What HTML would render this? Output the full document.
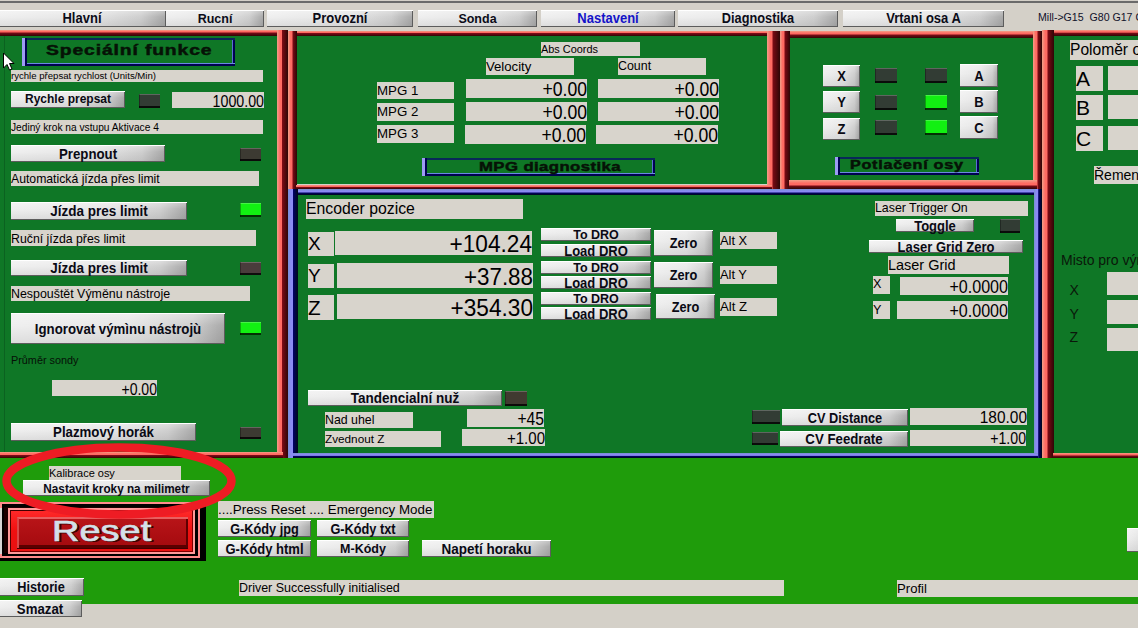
<!DOCTYPE html>
<html><head><meta charset="utf-8"><style>
html,body{margin:0;padding:0;}
body{width:1138px;height:628px;overflow:hidden;position:relative;background:#d4d0c8;font-family:"Liberation Sans",sans-serif;}
body>div{position:absolute;box-sizing:border-box;}
.b{text-align:center;font-weight:bold;white-space:nowrap;
 background:linear-gradient(180deg,rgba(255,255,255,.35) 0%,rgba(255,255,255,0) 40%,rgba(0,0,0,.08) 100%),linear-gradient(90deg,#efefef 0%,#e6e6e6 55%,#cfcfcf 85%,#a8a8a8 100%);
 box-shadow:inset 0 1px 0 #ffffff, inset -1px -1px 0 #5c5c5c;}
.bs{display:inline-block;line-height:normal;transform:scaleY(1.08);transform-origin:50% 79%;}
.l{background:#d8d4cc;color:#000;white-space:nowrap;overflow:hidden;}
.led{box-shadow:inset 1px 0 0 rgba(0,0,0,.3), inset 0 -2px 0 rgba(0,0,0,.8), inset 0 1px 0 rgba(255,255,255,.22);}
.t{white-space:nowrap;line-height:1;}
.title{border-style:solid;border-width:2px 2px 2px 3px;border-color:#0a1e50 #5050d0 #1a1a80 #9090f0;box-shadow:inset -1px -1px 0 #2040a0, 1px 1px 0 #000030;text-align:center;white-space:nowrap;}
.title span{font-weight:bold;color:#061406;display:inline-block;}
</style></head><body>
<div style="left:0px;top:0px;width:1138px;height:3px;background:linear-gradient(#d4d0c8 0,#d4d0c8 1px,#6a6a6a 1px,#6a6a6a 3px)"></div>
<div style="left:0px;top:455px;width:1138px;height:149px;background:#1f9c0b"></div>
<div style="left:0px;top:36px;width:277px;height:416px;background:#0f7726"></div>
<div style="left:296px;top:36px;width:471px;height:148px;background:#0f7726"></div>
<div style="left:790px;top:38px;width:243px;height:142px;background:#0f7726"></div>
<div style="left:1053px;top:36px;width:90px;height:417px;background:#0f7726"></div>
<div style="left:297px;top:194px;width:737px;height:259px;background:#0f7726"></div>
<div style="left:4px;top:36px;width:1px;height:416px;background:#0b6220"></div>
<div style="left:0px;top:30px;width:288px;height:6px;background:linear-gradient(180deg,#f0a088 0px,#ff6a62 1.5px,#ff6a62 2.0px,#7a0a14 3.0px,#2e0606 100%)"></div>
<div style="left:277px;top:30px;width:11px;height:428px;background:linear-gradient(90deg,#f0a088 0px,#ff6a62 3.0px,#ff6a62 4.5px,#7a0a14 5.5px,#2e0606 100%)"></div>
<div style="left:0px;top:452px;width:283px;height:5.5px;background:linear-gradient(180deg,#f0a088 0px,#ff6a62 1.8px,#ff6a62 2.5px,#7a0a14 3.5px,#2e0606 100%)"></div>
<div style="left:288px;top:31px;width:492px;height:5px;background:linear-gradient(180deg,#f0a088 0px,#ff6a62 1.2px,#ff6a62 1.5px,#7a0a14 2.5px,#2e0606 100%)"></div>
<div style="left:288px;top:31px;width:8.5px;height:158px;background:linear-gradient(90deg,#f0a088 0px,#ff6a62 2.7px,#ff6a62 4.0px,#7a0a14 5.0px,#2e0606 100%)"></div>
<div style="left:767px;top:31px;width:13px;height:158px;background:linear-gradient(90deg,#f0a088 0px,#ff6a62 3.3px,#ff6a62 5.0px,#7a0a14 6.0px,#2e0606 100%)"></div>
<div style="left:296px;top:184.5px;width:476px;height:4.5px;background:linear-gradient(180deg,#f0a088 0px,#ff6a62 1.2px,#ff6a62 1.5px,#7a0a14 2.5px,#2e0606 100%)"></div>
<div style="left:780px;top:31px;width:262px;height:7px;background:linear-gradient(180deg,#f0a088 0px,#ff6a62 2.1px,#ff6a62 3.0px,#7a0a14 4.0px,#2e0606 100%)"></div>
<div style="left:780px;top:31px;width:10px;height:158px;background:linear-gradient(90deg,#f0a088 0px,#ff6a62 2.7px,#ff6a62 4.0px,#7a0a14 5.0px,#2e0606 100%)"></div>
<div style="left:1033px;top:31px;width:9px;height:158px;background:linear-gradient(90deg,#f0a088 0px,#ff6a62 2.7px,#ff6a62 4.0px,#7a0a14 5.0px,#2e0606 100%)"></div>
<div style="left:789px;top:179.5px;width:248px;height:9.0px;background:linear-gradient(180deg,#f0a088 0px,#ff6a62 3.3px,#ff6a62 5.0px,#7a0a14 6.0px,#2e0606 100%)"></div>
<div style="left:1042px;top:30px;width:96px;height:6px;background:linear-gradient(180deg,#f0a088 0px,#ff6a62 1.6px,#ff6a62 2.2px,#7a0a14 3.2px,#2e0606 100%)"></div>
<div style="left:1042px;top:30px;width:11.5px;height:428px;background:linear-gradient(90deg,#f0a088 0px,#ff6a62 3.3px,#ff6a62 5.0px,#7a0a14 6.0px,#2e0606 100%)"></div>
<div style="left:1053px;top:453px;width:85px;height:5px;background:linear-gradient(180deg,#f0a088 0px,#ff6a62 1.5px,#ff6a62 2.0px,#7a0a14 3.0px,#2e0606 100%)"></div>
<div style="left:288px;top:188.5px;width:754px;height:6.099999999999994px;background:linear-gradient(180deg,#7890d0 0px,#8a8af4 2.1px,#8a8af4 3.0px,#000064 4.0px,#000818 100%)"></div>
<div style="left:288px;top:188.5px;width:9.699999999999989px;height:269.5px;background:linear-gradient(90deg,#7890d0 0px,#8a8af4 3.0px,#8a8af4 4.5px,#000064 5.5px,#000818 100%)"></div>
<div style="left:1034px;top:188.5px;width:8px;height:269.5px;background:linear-gradient(90deg,#7890d0 0px,#8a8af4 2.5px,#8a8af4 3.7px,#000064 4.7px,#000818 100%)"></div>
<div style="left:293px;top:452.6px;width:745px;height:5.399999999999977px;background:linear-gradient(180deg,#7890d0 0px,#8a8af4 1.7px,#8a8af4 2.4px,#000064 3.4px,#000818 100%)"></div>
<div class="b" style="left:-2px;top:10px;width:168px;height:17px;line-height:18px;font-size:13.0px;color:#0c0c18"><span class="bs">Hlavní</span></div>
<div class="b" style="left:166px;top:10px;width:98px;height:17px;line-height:18px;font-size:12.5px;color:#0c0c18"><span class="bs">Rucní</span></div>
<div class="b" style="left:267px;top:10px;width:146px;height:17px;line-height:18px;font-size:13.0px;color:#0c0c18"><span class="bs">Provozní</span></div>
<div class="b" style="left:418px;top:10px;width:119px;height:17px;line-height:18px;font-size:12.5px;color:#0c0c18"><span class="bs">Sonda</span></div>
<div class="b" style="left:541px;top:10px;width:134px;height:17px;line-height:18px;font-size:13.0px;color:#1414c8"><span class="bs">Nastavení</span></div>
<div class="b" style="left:678px;top:10px;width:160px;height:17px;line-height:18px;font-size:12.75px;color:#0c0c18"><span class="bs">Diagnostika</span></div>
<div class="b" style="left:843px;top:10px;width:161px;height:17px;line-height:18px;font-size:13.0px;color:#0c0c18"><span class="bs">Vrtani osa A</span></div>
<div class="t" style="left:1038px;top:12px;font-size:10.6px;color:#10102a;font-weight:normal;">Mill-&gt;G15&nbsp;&nbsp;G80 G17 G40 G21 G90 G94 G54 G49 G99 G64 G97</div>
<div style="left:22px;top:38px;width:213px;height:27.5px;box-shadow:inset 3px 0 0 #9c9cf4, inset 5px 0 0 #000050, inset 0 2px 0 #082858, inset 0 -2px 0 #000050, inset 0 -3px 0 #6a8ae0, inset -2px 0 0 #000050, inset -3px 0 0 #5a70d0"></div>
<div class="t" style="left:45.6px;top:42.7px;font-size:14px;font-weight:bold;letter-spacing:0.63px;color:#061206;-webkit-text-stroke:0.45px #061206"><span style="display:inline-block;transform:scaleX(1.38);transform-origin:0 0">Speciální funkce</span></div>
<div class="l" style="left:11px;top:70px;width:252px;height:12px;line-height:12px;font-size:9.61px;padding-left:0px;font-weight:normal">rychle přepsat rychlost (Units/Min)</div>
<div class="b" style="left:11px;top:91px;width:114px;height:17px;line-height:16px;font-size:12.0px;color:#0a0a14"><span class="bs">Rychle prepsat</span></div>
<div class="led" style="left:139px;top:94px;width:21px;height:14px;background:#323c34"></div>
<div class="l" style="left:172px;top:92px;width:92px;height:16px;line-height:21px;font-size:14.22px;text-align:right;padding-right:0px"><span style="display:inline-block;line-height:normal;transform:scaleY(1.12);transform-origin:100% 79%">1000.00</span></div>
<div class="l" style="left:11px;top:120px;width:252px;height:14px;line-height:16px;font-size:10.2px;padding-left:0px;font-weight:normal">Jediný krok na vstupu Aktivace 4</div>
<div class="b" style="left:11px;top:145px;width:154px;height:17px;line-height:19px;font-size:13.25px;color:#0a0a14"><span class="bs">Prepnout</span></div>
<div class="led" style="left:240px;top:148px;width:21px;height:13px;background:#3c3a32"></div>
<div class="l" style="left:11px;top:171px;width:248px;height:15px;line-height:17px;font-size:12.22px;padding-left:0px;font-weight:normal">Automatická jízda přes limit</div>
<div class="b" style="left:11px;top:202px;width:176px;height:18px;line-height:20px;font-size:13.5px;color:#0a0a14"><span class="bs">Jízda pres limit</span></div>
<div class="led" style="left:240px;top:203px;width:21px;height:14px;background:#12f012"></div>
<div class="l" style="left:11px;top:230px;width:245px;height:16px;line-height:18px;font-size:12.32px;padding-left:0px;font-weight:normal">Ruční jízda přes limit</div>
<div class="b" style="left:11px;top:260px;width:176px;height:16px;line-height:18px;font-size:13.5px;color:#0a0a14"><span class="bs">Jízda pres limit</span></div>
<div class="led" style="left:240px;top:262px;width:21px;height:13px;background:#4a3c3c"></div>
<div class="l" style="left:11px;top:286px;width:239px;height:15px;line-height:17px;font-size:12.4px;padding-left:0px;font-weight:normal">Nespouštět Výměnu nástroje</div>
<div class="b" style="left:11px;top:313px;width:214px;height:31px;line-height:33px;font-size:13.25px;color:#0a0a14"><span class="bs">Ignorovat výmìnu nástrojù</span></div>
<div class="led" style="left:240px;top:322px;width:21px;height:13px;background:#12f012"></div>
<div class="t" style="left:11px;top:355px;font-size:10.85px;color:#061006;font-weight:normal;">Průměr sondy</div>
<div class="l" style="left:52px;top:380px;width:105px;height:16px;line-height:21px;font-size:14.06px;text-align:right;padding-right:0px"><span style="display:inline-block;line-height:normal;transform:scaleY(1.12);transform-origin:100% 79%">+0.00</span></div>
<div class="b" style="left:11px;top:423px;width:185px;height:18px;line-height:20px;font-size:13.25px;color:#0a0a14"><span class="bs">Plazmový horák</span></div>
<div class="led" style="left:240px;top:427px;width:21px;height:12px;background:#3c3a32"></div>
<div class="l" style="left:541px;top:42px;width:99px;height:14px;line-height:14px;font-size:10.91px;padding-left:0px;font-weight:normal">Abs Coords</div>
<div class="l" style="left:486px;top:58px;width:88px;height:17px;line-height:17px;font-size:13.17px;padding-left:0px;font-weight:normal">Velocity</div>
<div class="l" style="left:618px;top:58px;width:88px;height:17px;line-height:17px;font-size:12.42px;padding-left:0px;font-weight:normal">Count</div>
<div class="l" style="left:377px;top:82px;width:77px;height:17px;line-height:17px;font-size:13.29px;padding-left:0px;font-weight:normal">MPG 1</div>
<div class="l" style="left:377px;top:103px;width:77px;height:18px;line-height:18px;font-size:13.29px;padding-left:0px;font-weight:normal">MPG 2</div>
<div class="l" style="left:377px;top:125px;width:77px;height:18px;line-height:18px;font-size:13.29px;padding-left:0px;font-weight:normal">MPG 3</div>
<div class="l" style="left:466px;top:79px;width:121px;height:19px;line-height:22px;font-size:17.63px;text-align:right;padding-right:0px"><span style="display:inline-block;line-height:normal;transform:scaleY(1.12);transform-origin:100% 79%">+0.00</span></div>
<div class="l" style="left:466px;top:102px;width:121px;height:19px;line-height:22px;font-size:17.63px;text-align:right;padding-right:0px"><span style="display:inline-block;line-height:normal;transform:scaleY(1.12);transform-origin:100% 79%">+0.00</span></div>
<div class="l" style="left:465px;top:125px;width:121px;height:19px;line-height:22px;font-size:17.63px;text-align:right;padding-right:0px"><span style="display:inline-block;line-height:normal;transform:scaleY(1.12);transform-origin:100% 79%">+0.00</span></div>
<div class="l" style="left:598px;top:79px;width:121px;height:19px;line-height:22px;font-size:17.63px;text-align:right;padding-right:0px"><span style="display:inline-block;line-height:normal;transform:scaleY(1.12);transform-origin:100% 79%">+0.00</span></div>
<div class="l" style="left:598px;top:102px;width:121px;height:19px;line-height:22px;font-size:17.63px;text-align:right;padding-right:0px"><span style="display:inline-block;line-height:normal;transform:scaleY(1.12);transform-origin:100% 79%">+0.00</span></div>
<div class="l" style="left:596px;top:125px;width:122px;height:19px;line-height:22px;font-size:17.63px;text-align:right;padding-right:0px"><span style="display:inline-block;line-height:normal;transform:scaleY(1.12);transform-origin:100% 79%">+0.00</span></div>
<div style="left:422px;top:158px;width:233px;height:17.5px;box-shadow:inset 3px 0 0 #9c9cf4, inset 5px 0 0 #000050, inset 0 2px 0 #082858, inset 0 -2px 0 #000050, inset 0 -3px 0 #6a8ae0, inset -2px 0 0 #000050, inset -3px 0 0 #5a70d0"></div>
<div class="t" style="left:479.4px;top:160.8px;font-size:12.6px;font-weight:bold;letter-spacing:0.30px;color:#061206;-webkit-text-stroke:0.45px #061206"><span style="display:inline-block;transform:scaleX(1.33);transform-origin:0 0">MPG diagnostika</span></div>
<div class="b" style="left:823px;top:65px;width:37px;height:22px;line-height:24px;font-size:13px;color:#0a0a14"><span class="bs">X</span></div>
<div class="b" style="left:823px;top:91px;width:37px;height:22px;line-height:24px;font-size:13px;color:#0a0a14"><span class="bs">Y</span></div>
<div class="b" style="left:823px;top:118px;width:37px;height:22px;line-height:24px;font-size:13px;color:#0a0a14"><span class="bs">Z</span></div>
<div class="b" style="left:960px;top:64px;width:38px;height:23px;line-height:25px;font-size:13px;color:#0a0a14"><span class="bs">A</span></div>
<div class="b" style="left:960px;top:90px;width:38px;height:23px;line-height:25px;font-size:13px;color:#0a0a14"><span class="bs">B</span></div>
<div class="b" style="left:960px;top:116px;width:38px;height:23px;line-height:25px;font-size:13px;color:#0a0a14"><span class="bs">C</span></div>
<div class="led" style="left:875px;top:68px;width:22px;height:15px;background:#323c34"></div>
<div class="led" style="left:925px;top:68px;width:22px;height:15px;background:#323c34"></div>
<div class="led" style="left:875px;top:95px;width:22px;height:15px;background:#323c34"></div>
<div class="led" style="left:925px;top:95px;width:22px;height:15px;background:#12f012"></div>
<div class="led" style="left:875px;top:120px;width:22px;height:15px;background:#323c34"></div>
<div class="led" style="left:925px;top:120px;width:22px;height:15px;background:#12f012"></div>
<div style="left:835px;top:156.5px;width:144px;height:18.099999999999994px;box-shadow:inset 3px 0 0 #9c9cf4, inset 5px 0 0 #000050, inset 0 2px 0 #082858, inset 0 -2px 0 #000050, inset 0 -3px 0 #6a8ae0, inset -2px 0 0 #000050, inset -3px 0 0 #5a70d0"></div>
<div class="t" style="left:850.2px;top:160.1px;font-size:11.9px;font-weight:bold;letter-spacing:0.53px;color:#061206;-webkit-text-stroke:0.45px #061206"><span style="display:inline-block;transform:scaleX(1.36);transform-origin:0 0">Potlačení osy</span></div>
<div class="l" style="left:1070px;top:40px;width:80px;height:20px;line-height:20px;font-size:15.6px;padding-left:0px;font-weight:normal">Poloměr os</div>
<div class="l" style="left:1076px;top:66px;width:27px;height:25px;line-height:25px;font-size:21px;padding-left:0px;font-weight:normal">A</div>
<div class="l" style="left:1108px;top:66px;width:40px;height:24px;line-height:24px;font-size:13px;padding-left:0px;font-weight:normal"></div>
<div class="l" style="left:1076px;top:95px;width:27px;height:25px;line-height:25px;font-size:21px;padding-left:0px;font-weight:normal">B</div>
<div class="l" style="left:1108px;top:95px;width:40px;height:24px;line-height:24px;font-size:13px;padding-left:0px;font-weight:normal"></div>
<div class="l" style="left:1076px;top:126px;width:27px;height:25px;line-height:25px;font-size:21px;padding-left:0px;font-weight:normal">C</div>
<div class="l" style="left:1108px;top:126px;width:40px;height:24px;line-height:24px;font-size:13px;padding-left:0px;font-weight:normal"></div>
<div class="l" style="left:1094px;top:166px;width:60px;height:18px;line-height:18px;font-size:14px;padding-left:0px;font-weight:normal">Řemen</div>
<div class="t" style="left:1061px;top:252.5px;font-size:14px;color:#0a180a;font-weight:normal;">Misto pro výměnu</div>
<div class="t" style="left:1069.5px;top:282.5px;font-size:14px;color:#0a180a;font-weight:normal;">X</div>
<div class="l" style="left:1107px;top:272px;width:40px;height:23px;line-height:23px;font-size:13px;padding-left:0px;font-weight:normal"></div>
<div class="t" style="left:1069.5px;top:306.5px;font-size:14px;color:#0a180a;font-weight:normal;">Y</div>
<div class="l" style="left:1107px;top:300px;width:40px;height:24px;line-height:24px;font-size:13px;padding-left:0px;font-weight:normal"></div>
<div class="t" style="left:1069.5px;top:329.5px;font-size:14px;color:#0a180a;font-weight:normal;">Z</div>
<div class="l" style="left:1107px;top:328px;width:40px;height:23px;line-height:23px;font-size:13px;padding-left:0px;font-weight:normal"></div>
<div class="b" style="left:1127px;top:528px;width:20px;height:24px;line-height:26px;font-size:13px;color:#0a0a14"><span class="bs"></span></div>
<div class="l" style="left:306px;top:199px;width:217px;height:20px;line-height:20px;font-size:15.8px;padding-left:0px;font-weight:normal">Encoder pozice</div>
<div class="l" style="left:308px;top:232px;width:26px;height:24px;line-height:24px;font-size:19.08px;padding-left:0px;font-weight:normal">X</div>
<div class="l" style="left:335px;top:231px;width:197px;height:24px;line-height:28px;font-size:22.63px;text-align:right;padding-right:0px"><span style="display:inline-block;line-height:normal;transform:scaleY(1.07);transform-origin:100% 79%">+104.24</span></div>
<div class="l" style="left:308px;top:264px;width:26px;height:24px;line-height:24px;font-size:19.08px;padding-left:0px;font-weight:normal">Y</div>
<div class="l" style="left:337px;top:263px;width:196px;height:25px;line-height:29px;font-size:22.37px;text-align:right;padding-right:0px"><span style="display:inline-block;line-height:normal;transform:scaleY(1.07);transform-origin:100% 79%">+37.88</span></div>
<div class="l" style="left:308px;top:295px;width:26px;height:25px;line-height:25px;font-size:20.67px;padding-left:0px;font-weight:normal">Z</div>
<div class="l" style="left:337px;top:294px;width:196px;height:25px;line-height:29px;font-size:22.63px;text-align:right;padding-right:0px"><span style="display:inline-block;line-height:normal;transform:scaleY(1.07);transform-origin:100% 79%">+354.30</span></div>
<div class="b" style="left:541px;top:228px;width:110px;height:13px;line-height:15px;font-size:12.5px;color:#0a0a14"><span class="bs">To DRO</span></div>
<div class="b" style="left:541px;top:244px;width:110px;height:13px;line-height:15px;font-size:13.0px;color:#0a0a14"><span class="bs">Load DRO</span></div>
<div class="b" style="left:654px;top:230px;width:59px;height:26px;line-height:28px;font-size:12.75px;color:#0a0a14"><span class="bs">Zero</span></div>
<div class="b" style="left:541px;top:261px;width:110px;height:13px;line-height:15px;font-size:12.5px;color:#0a0a14"><span class="bs">To DRO</span></div>
<div class="b" style="left:541px;top:276px;width:110px;height:13px;line-height:15px;font-size:13.0px;color:#0a0a14"><span class="bs">Load DRO</span></div>
<div class="b" style="left:654px;top:262px;width:59px;height:26px;line-height:28px;font-size:12.75px;color:#0a0a14"><span class="bs">Zero</span></div>
<div class="b" style="left:541px;top:292px;width:110px;height:13px;line-height:15px;font-size:12.5px;color:#0a0a14"><span class="bs">To DRO</span></div>
<div class="b" style="left:541px;top:307px;width:110px;height:13px;line-height:15px;font-size:13.0px;color:#0a0a14"><span class="bs">Load DRO</span></div>
<div class="b" style="left:656px;top:294px;width:59px;height:25px;line-height:27px;font-size:12.75px;color:#0a0a14"><span class="bs">Zero</span></div>
<div class="l" style="left:720px;top:232px;width:57px;height:17px;line-height:17px;font-size:12.89px;padding-left:0px;font-weight:normal">Alt X</div>
<div class="l" style="left:720px;top:266px;width:57px;height:18px;line-height:18px;font-size:12.89px;padding-left:0px;font-weight:normal">Alt Y</div>
<div class="l" style="left:720px;top:298px;width:57px;height:18px;line-height:18px;font-size:13.2px;padding-left:0px;font-weight:normal">Alt Z</div>
<div class="l" style="left:875px;top:201px;width:153px;height:15px;line-height:15px;font-size:12.35px;padding-left:0px;font-weight:normal">Laser Trigger On</div>
<div class="b" style="left:896px;top:219px;width:78px;height:13px;line-height:15px;font-size:13.0px;color:#0a0a14"><span class="bs">Toggle</span></div>
<div class="led" style="left:1000px;top:219px;width:20px;height:14px;background:#323c34"></div>
<div class="b" style="left:869px;top:240px;width:154px;height:13px;line-height:15px;font-size:13.0px;color:#0a0a14"><span class="bs">Laser Grid Zero</span></div>
<div class="l" style="left:888px;top:256px;width:121px;height:18px;line-height:18px;font-size:14.47px;padding-left:0px;font-weight:normal">Laser Grid</div>
<div class="l" style="left:873px;top:276px;width:17px;height:18px;line-height:16px;font-size:12.62px;padding-left:0px;font-weight:normal">X</div>
<div class="l" style="left:900px;top:277px;width:108px;height:18px;line-height:21px;font-size:16.09px;text-align:right;padding-right:0px"><span style="display:inline-block;line-height:normal;transform:scaleY(1.12);transform-origin:100% 79%">+0.0000</span></div>
<div class="l" style="left:873px;top:301px;width:17px;height:18px;line-height:18px;font-size:12.62px;padding-left:0px;font-weight:normal">Y</div>
<div class="l" style="left:897px;top:301px;width:111px;height:18px;line-height:21px;font-size:16.09px;text-align:right;padding-right:0px"><span style="display:inline-block;line-height:normal;transform:scaleY(1.12);transform-origin:100% 79%">+0.0000</span></div>
<div class="b" style="left:308px;top:390px;width:194px;height:16px;line-height:18px;font-size:13.5px;color:#0a0a14"><span class="bs">Tandencialní nuž</span></div>
<div class="led" style="left:505px;top:391px;width:22px;height:15px;background:#403a30"></div>
<div class="l" style="left:325px;top:412px;width:88px;height:16px;line-height:16px;font-size:12.36px;padding-left:0px;font-weight:normal">Nad uhel</div>
<div class="l" style="left:467px;top:409px;width:77px;height:18px;line-height:21px;font-size:15.68px;text-align:right;padding-right:0px"><span style="display:inline-block;line-height:normal;transform:scaleY(1.12);transform-origin:100% 79%">+45</span></div>
<div class="l" style="left:325px;top:431px;width:116px;height:16px;line-height:16px;font-size:11.75px;padding-left:0px;font-weight:normal">Zvednout Z</div>
<div class="l" style="left:462px;top:429px;width:83px;height:17px;line-height:20px;font-size:15.05px;text-align:right;padding-right:0px"><span style="display:inline-block;line-height:normal;transform:scaleY(1.12);transform-origin:100% 79%">+1.00</span></div>
<div class="led" style="left:752px;top:410px;width:28px;height:14px;background:#323c34"></div>
<div class="b" style="left:782px;top:409px;width:126px;height:17px;line-height:19px;font-size:12.75px;color:#0a0a14"><span class="bs">CV Distance</span></div>
<div class="l" style="left:910px;top:408px;width:117px;height:17px;line-height:20px;font-size:15.45px;text-align:right;padding-right:0px"><span style="display:inline-block;line-height:normal;transform:scaleY(1.12);transform-origin:100% 79%">180.00</span></div>
<div class="led" style="left:752px;top:432px;width:26px;height:13px;background:#323c34"></div>
<div class="b" style="left:780px;top:431px;width:128px;height:16px;line-height:18px;font-size:13.25px;color:#0a0a14"><span class="bs">CV Feedrate</span></div>
<div class="l" style="left:910px;top:430px;width:116px;height:16px;line-height:19px;font-size:14.14px;text-align:right;padding-right:0px"><span style="display:inline-block;line-height:normal;transform:scaleY(1.12);transform-origin:100% 79%">+1.00</span></div>
<div class="l" style="left:49px;top:466px;width:132px;height:14px;line-height:14px;font-size:10.97px;padding-left:0px;font-weight:normal">Kalibrace osy</div>
<div class="b" style="left:23px;top:480px;width:187px;height:16px;line-height:18px;font-size:11.75px;color:#0a0a14"><span class="bs">Nastavit kroky na milimetr</span></div>
<div style="left:0px;top:502px;width:206px;height:59px;background:#000"></div>
<div style="left:0px;top:502px;width:200px;height:56px;border:2px solid #ff8c8c;border-left-width:2px;background:#1a0000"></div>
<div style="left:2px;top:504px;width:196px;height:52px;border:3px solid #000;border-left:2px solid #000"></div>
<div style="left:8px;top:508px;width:187px;height:46px;border:2px solid #ff9a9a;background:linear-gradient(180deg,#ff2a2a,#f01010 50%,#e81010)"></div>
<div style="left:10px;top:510px;width:183px;height:42px;border:1px solid #7a0000;border-top-color:#400000;border-left-color:#500000"></div>
<div style="left:17px;top:517px;width:171px;height:31px;background:linear-gradient(180deg,#b81418,#a40a0e);border-top:2px solid #e86060;border-left:2px solid #d84848;box-shadow:inset 0 -3px 0 #5a0000, inset -2px 0 0 #600000, 0 1px 0 #400000"></div>
<div style="left:0px;top:508px;width:2px;height:46px;background:#d6d6d6"></div>
<div class="t" style="left:52px;top:517px;font-size:29px;font-weight:normal;color:#d4e0e8;-webkit-text-stroke:0.7px #d4e0e8;text-shadow:1px 1px 0 #3a0000, 2px 1px 0 #3a0000"><span style="display:inline-block;transform:scaleX(1.31);transform-origin:0 0">Reset</span></div>
<div class="l" style="left:218px;top:501px;width:216px;height:17px;line-height:17px;font-size:13.35px;padding-left:0px;font-weight:normal">....Press Reset .... Emergency Mode</div>
<div class="b" style="left:218px;top:520px;width:93px;height:17px;line-height:19px;font-size:12.75px;color:#0a0a14"><span class="bs">G-Kódy jpg</span></div>
<div class="b" style="left:317px;top:520px;width:92px;height:17px;line-height:19px;font-size:12.75px;color:#0a0a14"><span class="bs">G-Kódy txt</span></div>
<div class="b" style="left:218px;top:540px;width:93px;height:17px;line-height:19px;font-size:13.0px;color:#0a0a14"><span class="bs">G-Kódy html</span></div>
<div class="b" style="left:317px;top:540px;width:92px;height:17px;line-height:19px;font-size:12.5px;color:#0a0a14"><span class="bs">M-Kódy</span></div>
<div class="b" style="left:422px;top:540px;width:129px;height:17px;line-height:19px;font-size:13.5px;color:#0a0a14"><span class="bs">Napetí horaku</span></div>
<div class="b" style="left:-2px;top:578px;width:86px;height:18px;line-height:20px;font-size:12.75px;color:#0a0a14"><span class="bs">Historie</span></div>
<div class="b" style="left:-2px;top:600px;width:84px;height:17px;line-height:19px;font-size:13.25px;color:#0a0a14"><span class="bs">Smazat</span></div>
<div class="l" style="left:239px;top:580px;width:545px;height:16px;line-height:16px;font-size:12.48px;padding-left:0px;font-weight:normal">Driver Successfully initialised</div>
<div class="l" style="left:897px;top:580px;width:250px;height:17px;line-height:17px;font-size:13.15px;padding-left:0px;font-weight:normal">Profil</div>
<svg style="position:absolute;left:0;top:0" width="1138" height="628"><ellipse cx="119" cy="481" rx="112.5" ry="33.5" fill="none" stroke="#ee1c24" stroke-width="8.5"/></svg>
<svg style="position:absolute;left:0;top:0" width="40" height="80"><path d="M3.5 53 L3.5 68 L7 64.5 L9.5 70 L12 69 L9.5 63.5 L14 63.5 Z" fill="#fff" stroke="#000" stroke-width="1"/></svg>
</body></html>
